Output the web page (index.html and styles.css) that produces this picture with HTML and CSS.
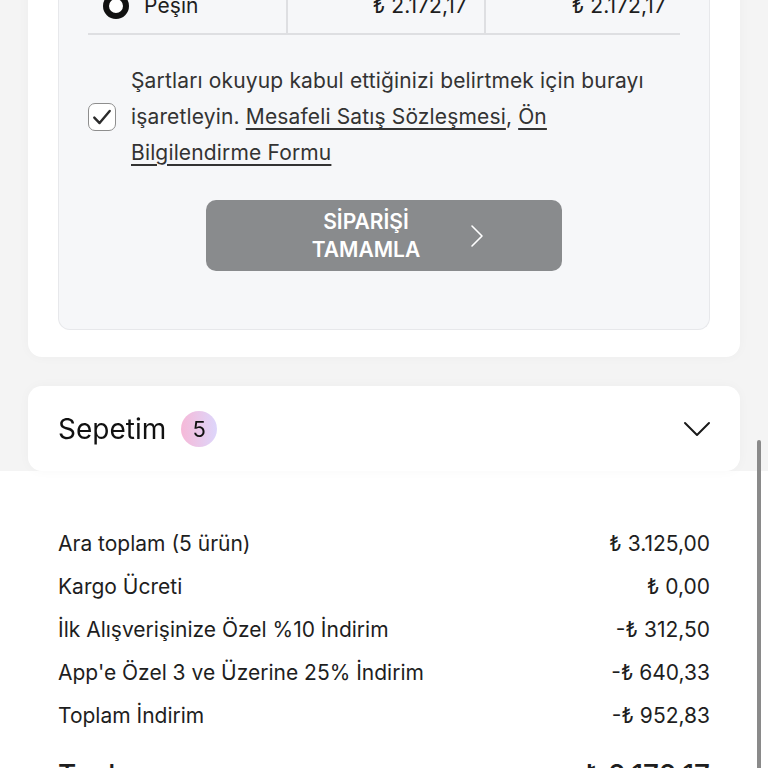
FILE: index.html
```html
<!DOCTYPE html>
<html lang="tr">
<head>
    <meta charset="UTF-8">
    <meta name="viewport" content="width=device-width, initial-scale=1.0">
    <title>Sepet</title>
    <link rel="stylesheet" href="styles.css">
</head>
<body>
    <div class="page">
        <div class="card payment">
            <div class="terms-box">
                <div class="plan-row">
                    <div class="plan-cell plan-name">
                        <span class="radio"></span>
                        <span>Peşin</span>
                    </div>
                    <div class="plan-cell plan-price">₺ 2.172,17</div>
                    <div class="plan-cell plan-price">₺ 2.172,17</div>
                </div>

                <label class="terms">
                    <span class="checkbox">
                        <svg width="22" height="22" viewBox="0 0 20 20"><path d="M3 10.5 L7.8 15.5 L17 4.5" fill="none" stroke="#2b2b2b" stroke-width="2.2" stroke-linecap="round" stroke-linejoin="round"/></svg>
                    </span>
                    <span class="terms-text">Şartları okuyup kabul ettiğinizi belirtmek için burayı işaretleyin. <a href="#">Mesafeli Satış Sözleşmesi</a>, <a href="#">Ön Bilgilendirme Formu</a></span>
                </label>

                <button class="submit">
                    <span class="submit-label">SİPARİŞİ<br>TAMAMLA</span>
                    <svg class="submit-arrow" width="14" height="24" viewBox="0 0 14 24"><path d="M2 2 L12 12 L2 22" fill="none" stroke="#fff" stroke-width="1.6" stroke-linecap="round" stroke-linejoin="round"/></svg>
                </button>
            </div>
        </div>

        <div class="card basket">
            <div class="basket-title">
                <span>Sepetim</span>
                <span class="badge">5</span>
            </div>
            <svg width="28" height="18" viewBox="0 0 28 18"><path d="M2 3 L14 15 L26 3" fill="none" stroke="#1a1a1a" stroke-width="2" stroke-linecap="round" stroke-linejoin="round"/></svg>
        </div>

        <div class="summary">
            <div class="sum-row"><span>Ara toplam (5 ürün)</span><span>₺ 3.125,00</span></div>
            <div class="sum-row"><span>Kargo Ücreti</span><span>₺ 0,00</span></div>
            <div class="sum-row"><span>İlk Alışverişinize Özel %10 İndirim</span><span>-₺ 312,50</span></div>
            <div class="sum-row"><span>App'e Özel 3 ve Üzerine 25% İndirim</span><span>-₺ 640,33</span></div>
            <div class="sum-row"><span>Toplam İndirim</span><span>-₺ 952,83</span></div>
            <div class="sum-row total"><span>Toplam</span><span>₺ 2.172,17</span></div>
        </div>
    </div>
    <div class="scrollbar"></div>
</body>
</html>
```

FILE: styles.css
```css
body {
    margin: 0;
    font-family: Inter, "Noto Sans", sans-serif;
    color: #2a2a2a;
    background-color: #f4f4f4;
    overflow: hidden;
}
.page {
    margin-top: -22px;
}
.card {
    position: relative;
    background: white;
    margin: 0 28px;
    box-shadow: 0px 0px 12px rgba(0, 0, 0, 0.03);
}
.payment {
    padding: 0 30px 27px;
    border-radius: 0 0 14px 14px;
}
.terms-box {
    background: #f6f7f9;
    border: 1px solid #e7e8eb;
    border-top: none;
    border-radius: 0 0 12px 12px;
    padding: 0 29px 58px;
}
.plan-row {
    display: grid;
    grid-template-columns: 198px 198px 196px;
    border-bottom: 2px solid #dedfe2;
}
.plan-cell {
    height: 55px;
    display: flex;
    align-items: center;
    font-size: 21px;
    letter-spacing: 0.1px;
    color: #1e1e1e;
}
.plan-name {
    padding-left: 15px;
    gap: 15px;
}
.plan-price {
    justify-content: flex-end;
    padding-right: 17px;
    border-left: 2px solid #dedfe2;
}
.plan-row .plan-price:last-child {
    padding-right: 14px;
}
.radio {
    width: 14px;
    height: 14px;
    border: 6px solid #111;
    border-radius: 50%;
    background: white;
}
.terms {
    display: flex;
    align-items: center;
    gap: 15px;
    margin-top: 28px;
}
.checkbox {
    flex: none;
    width: 26px;
    height: 26px;
    border: 1.5px solid #8e8e8e;
    border-radius: 7px;
    display: flex;
    align-items: center;
    justify-content: center;
    background: white;
}
.terms-text {
    font-size: 21px;
    letter-spacing: 0.15px;
    line-height: 36px;
    color: #333;
}
.terms-text a {
    color: #333;
    text-decoration: underline;
    text-underline-offset: 4px;
}
.submit {
    display: flex;
    align-items: center;
    width: 356px;
    height: 71px;
    margin: 29px auto 0;
    padding: 0;
    background-color: #898b8d;
    color: white;
    border: none;
    border-radius: 10px;
    font-family: inherit;
    font-size: 21px;
    font-weight: 600;
    line-height: 28px;
    cursor: pointer;
}
.submit-label {
    width: 140px;
    margin-left: 90px;
    text-align: center;
}
.submit-arrow {
    margin-left: 34px;
}
.basket {
    margin-top: 29px;
    height: 85px;
    border-radius: 14px;
    padding: 0 29px 0 30px;
    display: flex;
    align-items: center;
    justify-content: space-between;
    z-index: 1;
}
.basket-title {
    display: flex;
    align-items: center;
    gap: 15px;
    font-size: 28px;
    color: #111;
}
.badge {
    width: 36px;
    height: 36px;
    border-radius: 50%;
    background: linear-gradient(90deg, #f6b9d8, #ddd6fb);
    font-size: 22px;
    display: flex;
    align-items: center;
    justify-content: center;
}
.summary {
    background: white;
    padding: 51px 58px 0;
}
.sum-row {
    display: flex;
    justify-content: space-between;
    font-size: 21px;
    line-height: 43px;
    color: #1e1e1e;
}
.sum-row.total {
    margin-top: 17px;
    font-size: 28px;
    font-weight: 500;
}
.scrollbar {
    position: fixed;
    left: 757px;
    top: 440px;
    width: 4px;
    height: 340px;
    border-radius: 2px;
    background: #8a8a8a;
}
```
